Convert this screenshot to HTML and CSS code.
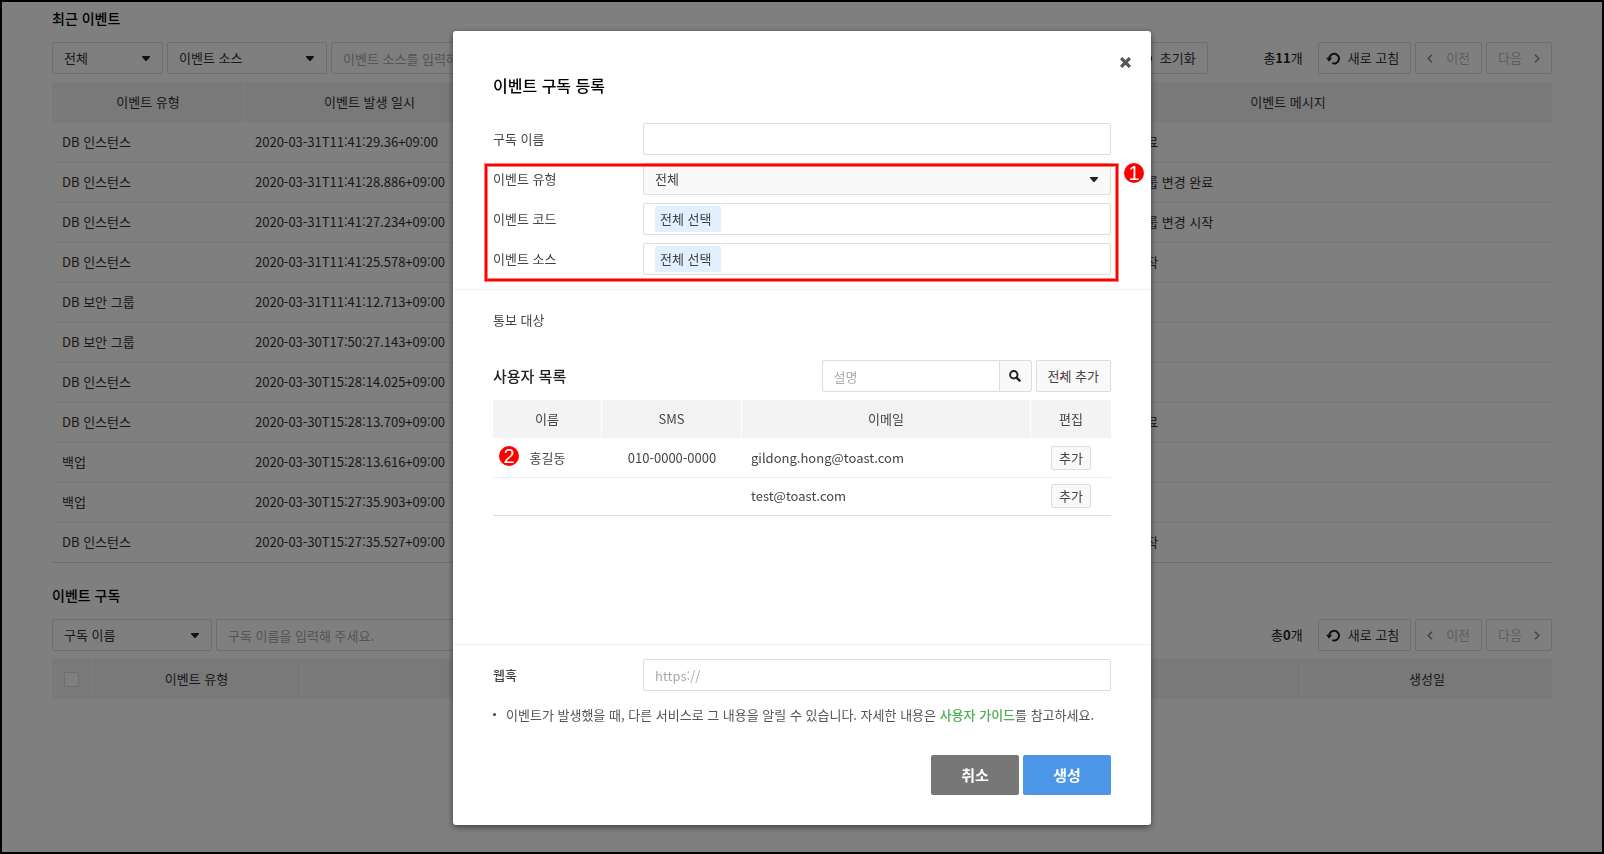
FILE: index.html
```html
<!DOCTYPE html>
<html lang="ko">
<head>
<meta charset="utf-8">
<title>이벤트 구독 등록</title>
<link rel="stylesheet" href="styles.css">
</head>
<body>
<svg class="sprite" aria-hidden="true">
  <symbol id="i-caret" viewBox="0 0 8 5"><path d="M0 0h8v1L4.500 5h-1L0 1z" fill="currentColor"/></symbol>
  <symbol id="i-reload" viewBox="0 0 14 13"><path d="M3.200 7A4.900 4.900 0 1 1 6.200 11.200" fill="none" stroke="currentColor" stroke-width="2"/><path d="M0 5.800h6.200L3.100 9.800z" fill="currentColor"/></symbol>
  <symbol id="i-prev" viewBox="0 0 6 9"><path d="M5 .7L1.200 4.500 5 8.300" fill="none" stroke="currentColor" stroke-width="1.500"/></symbol>
  <symbol id="i-next" viewBox="0 0 6 9"><path d="M1 .7l3.800 3.800L1 8.300" fill="none" stroke="currentColor" stroke-width="1.500"/></symbol>
  <symbol id="i-search" viewBox="0 0 12 12"><circle cx="4.800" cy="4.800" r="3.700" fill="none" stroke="currentColor" stroke-width="2"/><path d="M7.600 7.600l3 3" stroke="currentColor" stroke-width="2.400" stroke-linecap="round"/></symbol>
  <symbol id="i-close" viewBox="0 0 10 10"><path d="M1 1l8 8M9 1L1 9" stroke="currentColor" stroke-width="3"/></symbol>
</svg>

<main class="page">
  <section class="section">
    <h2 class="section-title">최근 이벤트</h2>
    <div class="toolbar">
      <div class="select select-sm">
        <select aria-label="이벤트 유형"><option>전체</option></select>
        <svg class="caret"><use href="#i-caret"/></svg>
      </div>
      <div class="select select-md">
        <select aria-label="검색 조건"><option>이벤트 소스</option></select>
        <svg class="caret"><use href="#i-caret"/></svg>
      </div>
      <input class="input filter" type="text" aria-label="이벤트 소스" placeholder="이벤트 소스를 입력해 주세요.">
      <button class="btn btn-icon" type="button"><svg class="reload"><use href="#i-reload"/></svg>초기화</button>
      <span class="total">총<b>11</b>개</span>
      <button class="btn btn-icon" type="button"><svg class="reload"><use href="#i-reload"/></svg>새로 고침</button>
      <button class="btn btn-page btn-prev" type="button" disabled><svg class="chevron"><use href="#i-prev"/></svg>이전</button>
      <button class="btn btn-page" type="button" disabled>다음<svg class="chevron"><use href="#i-next"/></svg></button>
    </div>
    <table class="grid">
      <colgroup><col class="c-type"><col class="c-date"><col><col class="c-message"></colgroup>
      <thead><tr><th>이벤트 유형</th><th>이벤트 발생 일시</th><th>이벤트 소스</th><th>이벤트 메시지</th></tr></thead>
      <tbody>
        <tr><td>DB 인스턴스</td><td>2020-03-31T11:41:29.36+09:00</td><td></td><td>DB 인스턴스 변경 완료</td></tr>
        <tr><td>DB 인스턴스</td><td>2020-03-31T11:41:28.886+09:00</td><td></td><td>DB 인스턴스 보안 그룹 변경 완료</td></tr>
        <tr><td>DB 인스턴스</td><td>2020-03-31T11:41:27.234+09:00</td><td></td><td>DB 인스턴스 보안 그룹 변경 시작</td></tr>
        <tr><td>DB 인스턴스</td><td>2020-03-31T11:41:25.578+09:00</td><td></td><td>DB 인스턴스 변경 시작</td></tr>
        <tr><td>DB 보안 그룹</td><td>2020-03-31T11:41:12.713+09:00</td><td></td><td></td></tr>
        <tr><td>DB 보안 그룹</td><td>2020-03-30T17:50:27.143+09:00</td><td></td><td></td></tr>
        <tr><td>DB 인스턴스</td><td>2020-03-30T15:28:14.025+09:00</td><td></td><td></td></tr>
        <tr><td>DB 인스턴스</td><td>2020-03-30T15:28:13.709+09:00</td><td></td><td>DB 인스턴스 백업 완료</td></tr>
        <tr><td>백업</td><td>2020-03-30T15:28:13.616+09:00</td><td></td><td></td></tr>
        <tr><td>백업</td><td>2020-03-30T15:27:35.903+09:00</td><td></td><td></td></tr>
        <tr><td>DB 인스턴스</td><td>2020-03-30T15:27:35.527+09:00</td><td></td><td>DB 인스턴스 백업 시작</td></tr>
      </tbody>
    </table>
  </section>

  <section class="section">
    <h2 class="section-title">이벤트 구독</h2>
    <div class="toolbar">
      <div class="select select-md">
        <select aria-label="검색 조건"><option>구독 이름</option></select>
        <svg class="caret"><use href="#i-caret"/></svg>
      </div>
      <input class="input filter filter-narrow" type="text" aria-label="구독 이름" placeholder="구독 이름을 입력해 주세요.">
      <span class="total">총<b>0</b>개</span>
      <button class="btn btn-icon" type="button"><svg class="reload"><use href="#i-reload"/></svg>새로 고침</button>
      <button class="btn btn-page btn-prev" type="button" disabled><svg class="chevron"><use href="#i-prev"/></svg>이전</button>
      <button class="btn btn-page" type="button" disabled>다음<svg class="chevron"><use href="#i-next"/></svg></button>
    </div>
    <table class="grid">
      <colgroup><col class="c-check"><col class="c-kind"><col><col><col class="c-created"></colgroup>
      <thead><tr><th><input class="check" type="checkbox" aria-label="전체 선택"></th><th>이벤트 유형</th><th>구독 이름</th><th>이벤트 소스</th><th>생성일</th></tr></thead>
    </table>
  </section>
</main>

<div class="backdrop">
  <div class="modal" role="dialog" aria-modal="true" aria-labelledby="modal-title">
    <button class="close" type="button" aria-label="닫기"><svg class="close-icon"><use href="#i-close"/></svg></button>
    <form>
      <div class="block block-form">
        <h1 class="modal-title" id="modal-title">이벤트 구독 등록</h1>
        <div class="field">
          <label for="sub-name">구독 이름</label>
          <input class="input" id="sub-name" type="text">
        </div>
        <div class="group">
          <div class="field">
            <label for="event-type">이벤트 유형</label>
            <div class="select select-light">
              <select id="event-type"><option>전체</option></select>
              <svg class="caret"><use href="#i-caret"/></svg>
            </div>
          </div>
          <div class="field">
            <label id="code-label">이벤트 코드</label>
            <div class="tags" role="listbox" aria-labelledby="code-label" tabindex="0"><span class="tag" role="option">전체 선택</span></div>
          </div>
          <div class="field">
            <label id="source-label">이벤트 소스</label>
            <div class="tags" role="listbox" aria-labelledby="source-label" tabindex="0"><span class="tag" role="option">전체 선택</span></div>
          </div>
          <div class="outline"></div>
          <span class="badge badge-group">1</span>
        </div>
      </div>

      <div class="block block-targets">
        <p class="targets-label">통보 대상</p>
        <div class="users-head">
          <h2 class="users-title">사용자 목록</h2>
          <div class="search">
            <input class="input" type="text" aria-label="설명" placeholder="설명">
            <button class="btn search-btn" type="button" aria-label="검색"><svg class="search-icon"><use href="#i-search"/></svg></button>
          </div>
          <button class="btn add-all" type="button">전체 추가<span class="mark"></span></button>
        </div>
        <table class="users">
          <colgroup><col class="u-name"><col class="u-sms"><col><col class="u-edit"></colgroup>
          <thead><tr><th>이름</th><th>SMS</th><th>이메일</th><th>편집</th></tr></thead>
          <tbody>
            <tr><td class="center named">홍길동<span class="badge badge-row">2</span></td><td class="center">010-0000-0000</td><td>gildong.hong@toast.com</td><td class="center"><button class="btn btn-small" type="button">추가</button></td></tr>
            <tr><td></td><td></td><td>test@toast.com</td><td class="center"><button class="btn btn-small" type="button">추가</button></td></tr>
          </tbody>
        </table>
      </div>

      <div class="block block-webhook">
        <div class="field">
          <label class="strong" for="webhook">웹훅</label>
          <input class="input" id="webhook" type="text" placeholder="https://">
        </div>
        <p class="note">이벤트가 발생했을 때, 다른 서비스로 그 내용을 알릴 수 있습니다. 자세한 내용은 <a href="#">사용자 가이드</a>를 참고하세요.</p>
        <div class="actions">
          <button class="action action-cancel" type="button">취소</button>
          <button class="action action-create" type="submit">생성</button>
        </div>
      </div>
    </form>
  </div>
</div>
</body>
</html>
```
FILE: styles.css
```css
* { box-sizing: border-box; }

body {
  margin: 0;
  min-height: 100vh;
  border: 2px solid #000;
  background: #fff;
  color: #333;
  font: 13px/20px "Noto Sans CJK KR", sans-serif;
}

button, input, select { font: inherit; color: inherit; margin: 0; }
h1, h2, p { margin: 0; }
svg { display: block; flex: none; }
.sprite { position: absolute; width: 0; height: 0; }

/* Page behind the dialog */
.page { padding: 6px 50px 0; }
.section { margin-bottom: 22px; }
.section-title { color: #000; font-size: 14px; font-weight: 500; line-height: 20px; margin-bottom: 14px; }

.toolbar { display: flex; align-items: center; gap: 4px; margin-bottom: 8px; }

.select { position: relative; height: 32px; }
.select select {
  appearance: none;
  display: block;
  width: 100%;
  height: 32px;
  padding: 0 30px 0 11px;
  border: 1px solid #ddd;
  border-radius: 2px;
  background: #fff;
}
.select-sm { width: 111px; }
.select-md { width: 160px; }
.select-light select { background: #f9f9f9; }
.caret { position: absolute; right: 13px; top: 14px; width: 8px; height: 5px; color: #222; pointer-events: none; }

.input {
  display: block;
  width: 100%;
  height: 32px;
  padding: 0 11px;
  border: 1px solid #ddd;
  border-radius: 2px;
  background: #fff;
}
.input::placeholder { color: #aaa; opacity: 1; }
.toolbar .filter { flex: 1; min-width: 0; width: auto; }
.toolbar .filter-narrow { flex: 0 1 480px; }

.btn {
  display: flex;
  align-items: center;
  justify-content: center;
  height: 32px;
  padding: 0 11px;
  border: 1px solid #ddd;
  border-radius: 2px;
  background: #f9f9f9;
  white-space: nowrap;
}
.toolbar .btn { background: #fff; }
.btn-icon { gap: 8px; padding-left: 7px; }
.btn-page { gap: 12px; }
.btn-prev { gap: 13px; }
.btn:disabled { color: #bbb; }
.reload { width: 14px; height: 13px; color: #222; }
.chevron { width: 6px; height: 9px; color: #888; }

.total { width: 91px; margin-left: auto; margin-right: 11px; text-align: right; color: #222; }
.total b { font-weight: 700; }

.grid, .users { width: 100%; border-spacing: 0; table-layout: fixed; }
.grid th, .users th {
  padding: 0;
  background: #f3f3f3;
  font-weight: 400;
  text-align: center;
  border-right: 1px solid #fff;
}
.grid th { height: 40px; }
.grid th:last-child, .users th:last-child { border-right: 0; }
.grid td { height: 40px; padding: 0 10px 2px; border-top: 1px solid #eee; white-space: nowrap; }
.grid tbody tr:first-child td { border-top-color: transparent; }
.grid tbody tr:last-child td { height: 41px; border-bottom: 1px solid #ddd; }
.c-type { width: 193px; }
.c-date { width: 250px; }
.c-message { width: 35.2%; }
.c-check { width: 40px; }
.c-kind { width: 210px; }
.c-created { width: 250px; }

.check {
  appearance: none;
  display: block;
  width: 15px;
  height: 15px;
  margin: 0 auto;
  border: 1px solid #ddd;
  border-radius: 1px;
  background: #fff;
}

/* Dialog */
.backdrop {
  position: fixed;
  inset: 2px;
  padding: 29px 20px 0;
  background: rgba(0, 0, 0, 0.5);
  overflow: hidden;
}
.modal {
  position: relative;
  max-width: 698px;
  margin: 0 auto;
  border-radius: 3px;
  background: #fff;
  box-shadow: 0 2px 6px rgba(0, 0, 0, 0.5);
  color: #444;
}
.close {
  position: absolute;
  top: 26px;
  right: 20px;
  padding: 0;
  border: 0;
  background: none;
}
.close-icon { width: 11px; height: 11px; color: #555; }

.block { padding: 0 40px; }
.block + .block { border-top: 1px solid #f0f0f0; }
.block-form { padding-top: 42px; padding-bottom: 14px; }
.modal-title { margin-bottom: 26px; color: #000; font-size: 16px; font-weight: 500; line-height: 24px; }

.field { display: grid; grid-template-columns: 150px 1fr; align-items: center; }
.field + .field, .group { margin-top: 8px; }
.strong { font-weight: 500; }
.tags {
  display: flex;
  align-items: center;
  height: 32px;
  padding: 0 11px;
  border: 1px solid #ddd;
  border-radius: 2px;
}
.tag { height: 26px; padding: 0 10px 0 5px; border-radius: 2px; background: #e1efff; line-height: 26px; }

.group { position: relative; }
.outline {
  position: absolute;
  inset: 1px -7px -6px -8px;
  border: 2px solid #f00;
  box-shadow: 0 0 0 1px rgba(255, 0, 0, 0.5), inset 0 0 0 1px rgba(255, 0, 0, 0.5);
  pointer-events: none;
}
.badge {
  position: absolute;
  width: 20px;
  height: 20px;
  border-radius: 50%;
  background: #f00;
  color: #fff;
  font: 20px/20px "Liberation Sans", sans-serif;
  text-align: center;
}
.badge-group { top: 0; right: -33px; }
.badge-row { top: 8px; left: 6px; }

.block-targets { min-height: 355px; padding-top: 20px; }
.targets-label { margin-bottom: 30px; }
.users-head { display: flex; align-items: center; gap: 4px; margin-bottom: 8px; }
.users-title { flex: 1; color: #222; font-size: 15px; font-weight: 500; }
.search { display: flex; width: 210px; }
.search .input { flex: 1; min-width: 0; border-right: 0; border-radius: 2px 0 0 2px; }
.search-btn { width: 33px; padding: 0; border-radius: 0 2px 2px 0; }
.search-icon { width: 12px; height: 12px; color: #222; }
.add-all { position: relative; }
.mark { position: absolute; left: 23px; top: 16px; width: 3px; height: 1px; background: #e00020; }

.users th { height: 38px; }
.users td { padding: 6px 9px 7px; height: 38px; border-top: 1px solid #eee; }
.users tbody tr:first-child td { padding-top: 8px; border-top: 0; height: 39px; }
.users tbody tr:last-child td { height: 39px; border-bottom: 1px solid #ddd; }
.users .center { text-align: center; }
.users .named { position: relative; }
.u-name { width: 109px; }
.u-sms { width: 140px; }
.u-edit { width: 80px; }
.btn-small { height: 24px; margin: 0 auto; padding: 0 7px; }

.block-webhook { padding-top: 14px; padding-bottom: 30px; }
.note { position: relative; margin-top: 14px; padding-left: 13px; color: #555; }
.note::before {
  content: "";
  position: absolute;
  left: 0;
  top: 8px;
  width: 3px;
  height: 3px;
  border-radius: 50%;
  background: #444;
}
.note a { color: #4caf50; font-weight: 500; text-decoration: none; }
.actions { display: flex; justify-content: flex-end; gap: 4px; margin-top: 30px; }
.action {
  width: 88px;
  height: 40px;
  padding: 0;
  border: 0;
  border-radius: 2px;
  color: #fff;
  font-size: 15px;
  font-weight: 700;
}
.action-cancel { background: #777; }
.action-create { background: #4b96e6; }
```
